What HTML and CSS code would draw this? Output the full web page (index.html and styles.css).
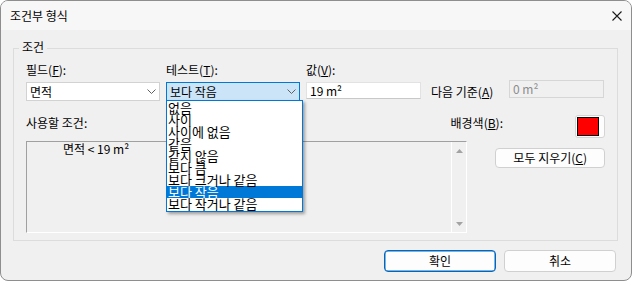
FILE: index.html
```html
<!DOCTYPE html>
<html>
<head>
    <title>조건부 형식</title>
    <meta charset="utf-8">
    <link rel="stylesheet" href="styles.css">
</head>
<body>
    <div class="dialog">
        <div class="titlebar">
            <span>조건부 형식</span>
            <svg class="close" width="10" height="10" viewBox="0 0 10 10">
                <path d="M0.5 0.5 L9.5 9.5 M9.5 0.5 L0.5 9.5" stroke="#1a1a1a" stroke-width="1.1" fill="none"/>
            </svg>
        </div>
        <div class="content">
            <div class="group">
                <div class="group-title">조건</div>
                <div class="fields">
                    <div class="label">필드(<u>F</u>):</div>
                    <div class="label">테스트(<u>T</u>):</div>
                    <div class="label">값(<u>V</u>):</div>
                    <div></div>
                    <div></div>

                    <div class="combo">
                        <span>면적</span>
                        <svg class="chevron" width="9" height="5" viewBox="0 0 9 5"><path d="M0.5 0.5 L4.5 4.5 L8.5 0.5" stroke="#606060" fill="none"/></svg>
                    </div>
                    <div class="combo combo-active">
                        <span>보다 작음</span>
                        <svg class="chevron" width="9" height="5" viewBox="0 0 9 5"><path d="M0.5 0.5 L4.5 4.5 L8.5 0.5" stroke="#606060" fill="none"/></svg>
                        <div class="dropdown">
                            <div class="option">없음</div>
                            <div class="option">사이</div>
                            <div class="option">사이에 없음</div>
                            <div class="option">같음</div>
                            <div class="option">같지 않음</div>
                            <div class="option">보다 큼</div>
                            <div class="option">보다 크거나 같음</div>
                            <div class="option selected">보다 작음</div>
                            <div class="option">보다 작거나 같음</div>
                        </div>
                    </div>
                    <div class="textbox">19 m²</div>
                    <div class="label label-by">다음 기준(<u>A</u>)</div>
                    <div class="textbox disabled">0 m²</div>
                </div>

                <div class="cond-head">
                    <div class="label">사용할 조건:</div>
                    <div class="label label-bg">배경색(<u>B</u>):</div>
                    <div class="color-btn"><div class="swatch"></div></div>
                </div>

                <div class="cond-body">
                    <div class="listbox">
                        <div class="list-items">
                            <div class="list-row">면적 &lt; 19 m²</div>
                        </div>
                        <div class="scrollbar">
                            <svg width="7" height="4" viewBox="0 0 7 4"><path d="M0 4 L3.5 0 L7 4 Z" fill="#a3a3a3"/></svg>
                            <svg width="7" height="4" viewBox="0 0 7 4"><path d="M0 0 L3.5 4 L7 0 Z" fill="#a3a3a3"/></svg>
                        </div>
                    </div>
                    <div class="btn btn-clear">모두 지우기(<u>C</u>)</div>
                </div>
            </div>

            <div class="actions">
                <div class="btn btn-default">확인</div>
                <div class="btn">취소</div>
            </div>
        </div>
    </div>
</body>
</html>
```

FILE: styles.css
```css
body {
    margin: 0;
    background-color: #ffffff;
    font-family: "Noto Sans CJK KR", "Noto Sans", sans-serif;
    font-size: 12px;
    color: #000;
}
.dialog {
    width: 632px;
    height: 281px;
    box-sizing: border-box;
    border: 1px solid #8e8e8e;
    border-radius: 8px;
    background: #f0f0f0;
    overflow: hidden;
}
.titlebar {
    height: 29px;
    background: #f7f7f7;
    display: flex;
    align-items: center;
    justify-content: space-between;
    padding: 0 9px;
    line-height: 14px;
}
.content {
    padding: 18px 13px 0 12px;
}
.group {
    height: 193px;
    box-sizing: border-box;
    border: 1px solid #dcdcdc;
    padding: 0 12px;
}
.group-title {
    display: table;
    margin: -9px 0 0 -7px;
    padding: 0 3px;
    background: #f0f0f0;
    line-height: 14px;
}
.label {
    line-height: 14px;
    white-space: nowrap;
}
.fields {
    display: grid;
    grid-template-columns: 134px 134px 115px 76px 95px;
    column-gap: 6px;
    row-gap: 5px;
    align-items: center;
    margin-top: 9px;
}
.label-by {
    margin-left: 4px;
}
.combo {
    position: relative;
    height: 19px;
    box-sizing: border-box;
    border: 1px solid #d2d2d2;
    background: #ffffff;
    padding-left: 3px;
    display: flex;
    align-items: center;
    justify-content: space-between;
    line-height: 14px;
}
.chevron {
    margin-right: 3px;
}
.combo-active {
    background: #cce4f7;
    border-color: #0078d7;
}
.dropdown {
    position: absolute;
    top: 100%;
    left: -1px;
    width: 137px;
    height: 112px;
    box-sizing: border-box;
    border: 1px solid #0078d7;
    background: #ffffff;
    box-shadow: 2px 2px 3px rgba(0, 0, 0, 0.35);
    padding-top: 1px;
    z-index: 5;
    overflow: hidden;
}
.option {
    font-size: 13px;
    line-height: 12px;
    height: 12px;
    padding-left: 1px;
    white-space: nowrap;
}
.option.selected {
    background: #0078d7;
    color: #ffffff;
}
.textbox {
    height: 17px;
    box-sizing: border-box;
    border: 1px solid #e2e2e2;
    border-bottom-color: #c8c8c8;
    background: #ffffff;
    padding-left: 3px;
    line-height: 15px;
    align-self: start;
}
.textbox.disabled {
    height: 18px;
    background: #f0f0f0;
    border: 1px solid #d6d6d6;
    color: #8c8c8c;
    margin-top: -2px;
}
.cond-head {
    display: flex;
    align-items: flex-start;
    height: 23px;
    margin-top: 14px;
}
.cond-head .label {
    margin-top: 1px;
}
.label-bg {
    margin-left: auto;
}
.color-btn {
    width: 30px;
    height: 23px;
    box-sizing: border-box;
    margin-left: 72px;
    border: 1px solid #d4d4d4;
    border-radius: 3px;
    background: #fdfdfd;
    padding: 1px 0 0 1px;
}
.swatch {
    width: 22px;
    height: 19px;
    box-sizing: border-box;
    border: 1px solid #000;
    background: #ff0000;
}
.cond-body {
    display: flex;
    align-items: flex-start;
    margin-top: 3px;
}
.listbox {
    width: 443px;
    height: 92px;
    box-sizing: border-box;
    border: 1px solid #a0a0a0;
    border-right-color: #ffffff;
    border-bottom-color: #ffffff;
    display: flex;
}
.list-items {
    flex: 1;
    padding-left: 36px;
}
.list-row {
    line-height: 14px;
}
.scrollbar {
    width: 15px;
    box-sizing: border-box;
    border-left: 1px solid #ffffff;
    display: flex;
    flex-direction: column;
    align-items: center;
    justify-content: space-between;
    padding: 7px 0 6px;
}
.btn {
    height: 22px;
    width: 112px;
    box-sizing: border-box;
    border: 1px solid #d0d0d0;
    border-radius: 4px;
    background: #fdfdfd;
    display: flex;
    align-items: center;
    justify-content: center;
    line-height: 14px;
}
.btn-clear {
    width: 110px;
    height: 20px;
    margin: 7px 0 0 28px;
}
.btn-default {
    border-color: #0067c0;
    box-shadow: inset 0 0 0 0.5px #0067c0;
}
.actions {
    display: flex;
    justify-content: flex-end;
    gap: 8px;
    margin: 9px 2px 0 0;
}
```
